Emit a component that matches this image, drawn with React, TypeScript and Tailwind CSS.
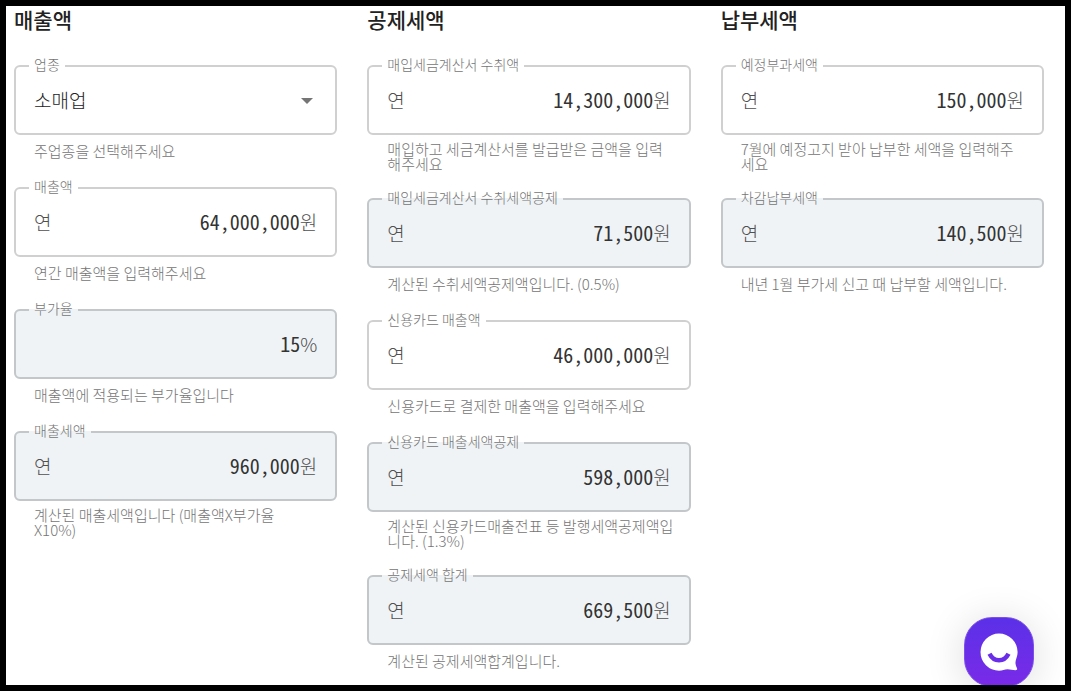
import { useState } from "react";

type Field = {
  id: string;
  label: string;
  hint: string;
  value: string;
  prefix?: string;
  unit?: string;
  computed?: boolean;
  options?: string[];
};

type Column = { title: string; fields: Field[] };

const columns: Column[] = [
  {
    title: "매출액",
    fields: [
      { id: "industry", label: "업종", hint: "주업종을 선택해주세요", value: "소매업", options: ["소매업", "음식점업", "제조업", "숙박업", "서비스업"] },
      { id: "sales", label: "매출액", hint: "연간 매출액을 입력해주세요", value: "64,000,000", prefix: "연", unit: "원" },
      { id: "rate", label: "부가율", hint: "매출액에 적용되는 부가율입니다", value: "15", unit: "%", computed: true },
      { id: "sales-tax", label: "매출세액", hint: "계산된 매출세액입니다 (매출액X부가율\nX10%)", value: "960,000", prefix: "연", unit: "원", computed: true },
    ],
  },
  {
    title: "공제세액",
    fields: [
      { id: "invoice", label: "매입세금계산서 수취액", hint: "매입하고 세금계산서를 발급받은 금액을 입력\n해주세요", value: "14,300,000", prefix: "연", unit: "원" },
      { id: "invoice-credit", label: "매입세금계산서 수취세액공제", hint: "계산된 수취세액공제액입니다. (0.5%)", value: "71,500", prefix: "연", unit: "원", computed: true },
      { id: "card", label: "신용카드 매출액", hint: "신용카드로 결제한 매출액을 입력해주세요", value: "46,000,000", prefix: "연", unit: "원" },
      { id: "card-credit", label: "신용카드 매출세액공제", hint: "계산된 신용카드매출전표 등 발행세액공제액입\n니다. (1.3%)", value: "598,000", prefix: "연", unit: "원", computed: true },
      { id: "credit-total", label: "공제세액 합계", hint: "계산된 공제세액합계입니다.", value: "669,500", prefix: "연", unit: "원", computed: true },
    ],
  },
  {
    title: "납부세액",
    fields: [
      { id: "prepaid", label: "예정부과세액", hint: "7월에 예정고지 받아 납부한 세액을 입력해주\n세요", value: "150,000", prefix: "연", unit: "원" },
      { id: "balance", label: "차감납부세액", hint: "내년 1월 부가세 신고 때 납부할 세액입니다.", value: "140,500", prefix: "연", unit: "원", computed: true },
    ],
  },
];

function OutlinedField({ field }: { field: Field }) {
  const [value, setValue] = useState(field.value);
  const hintId = `${field.id}-hint`;

  return (
    <div>
      <fieldset
        className={`min-w-0 rounded-md border-2 px-[13px] pb-2 ${
          field.computed ? "border-[#c3c7ca] bg-[#eff3f6]" : "border-[#d0d0d0] bg-white"
        }`}
      >
        <legend className="h-5 px-[5px] text-sm leading-4 text-[#757575]">
          <label htmlFor={field.id}>{field.label}</label>
        </legend>
        <div className="flex h-[49px] items-center px-[5px] text-[19px] text-[#505050]">
          {field.options ? (
            <>
              <select
                id={field.id}
                value={value}
                onChange={(e) => setValue(e.target.value)}
                aria-describedby={hintId}
                className="min-w-0 flex-1 appearance-none bg-transparent text-[#222222] outline-none"
              >
                {field.options.map((option) => (
                  <option key={option}>{option}</option>
                ))}
              </select>
              <svg viewBox="0 0 12 6" className="mr-1 h-1.5 w-3 fill-[#757575]" aria-hidden="true">
                <path d="M0 0h12L6 6z" />
              </svg>
            </>
          ) : (
            <>
              {field.prefix && <span>{field.prefix}</span>}
              <input
                id={field.id}
                value={value}
                readOnly={field.computed}
                onChange={(e) => setValue(e.target.value)}
                inputMode="numeric"
                aria-describedby={hintId}
                className="min-w-0 flex-1 bg-transparent pb-0.5 text-right font-['Noto_Sans_Mono_CJK_KR','Liberation_Mono',monospace] text-xl text-[#333333] outline-none"
              />
              <span>{field.unit}</span>
            </>
          )}
        </div>
      </fieldset>
      <div className="flex min-h-9 items-center pt-1.5 pr-3 pb-[11px] pl-5">
        <p id={hintId} className="text-[15px] leading-[15px] whitespace-pre-line text-[#757575]">
          {field.hint}
        </p>
      </div>
    </div>
  );
}

export default function App() {
  return (
    <div className="relative min-h-screen overflow-hidden border-6 border-black bg-white font-['Noto_Sans_CJK_KR',sans-serif] font-light">
      <main className="grid grid-cols-3 gap-[30px] pr-[21px] pl-2">
        {columns.map((column) => (
          <section key={column.title} className="min-w-0">
            <h2 className="mb-6 text-[21px] leading-[26px] font-medium text-[#222222]">{column.title}</h2>
            <div className="flex flex-col gap-[7px]">
              {column.fields.map((field) => (
                <OutlinedField key={field.id} field={field} />
              ))}
            </div>
          </section>
        ))}
      </main>
      <button
        type="button"
        aria-label="채팅 상담"
        className="absolute right-[31px] -bottom-0.5 flex size-[70px] items-center justify-center rounded-[28px] border border-[#7a50e8] bg-linear-to-b from-[#5a30e8] to-[#7a2ae8] shadow-[0_4px_40px_rgba(0,0,0,0.14)]"
      >
        <svg viewBox="0 0 38 38" className="size-[38px]" aria-hidden="true">
          <path
            fill="#ffffff"
            d="M19 .5a18.5 18.6 0 1 0 0 37.2c3.5 0 5.500-1.4 8.500-1.400 3 0 5 .9 8 .9 1.600 0 2-1 1.400-2.200-1-2.200-1.500-3.800-1.400-5.700.1-3 2.100-5.800 2.100-10.300A18.600 18.500 0 0 0 19 .5z"
          />
          <path d="M9.5 20.8c4.3 8.600 14.700 8.600 19 0" fill="none" stroke="#6a2de8" strokeWidth="4.5" />
        </svg>
      </button>
    </div>
  );
}
